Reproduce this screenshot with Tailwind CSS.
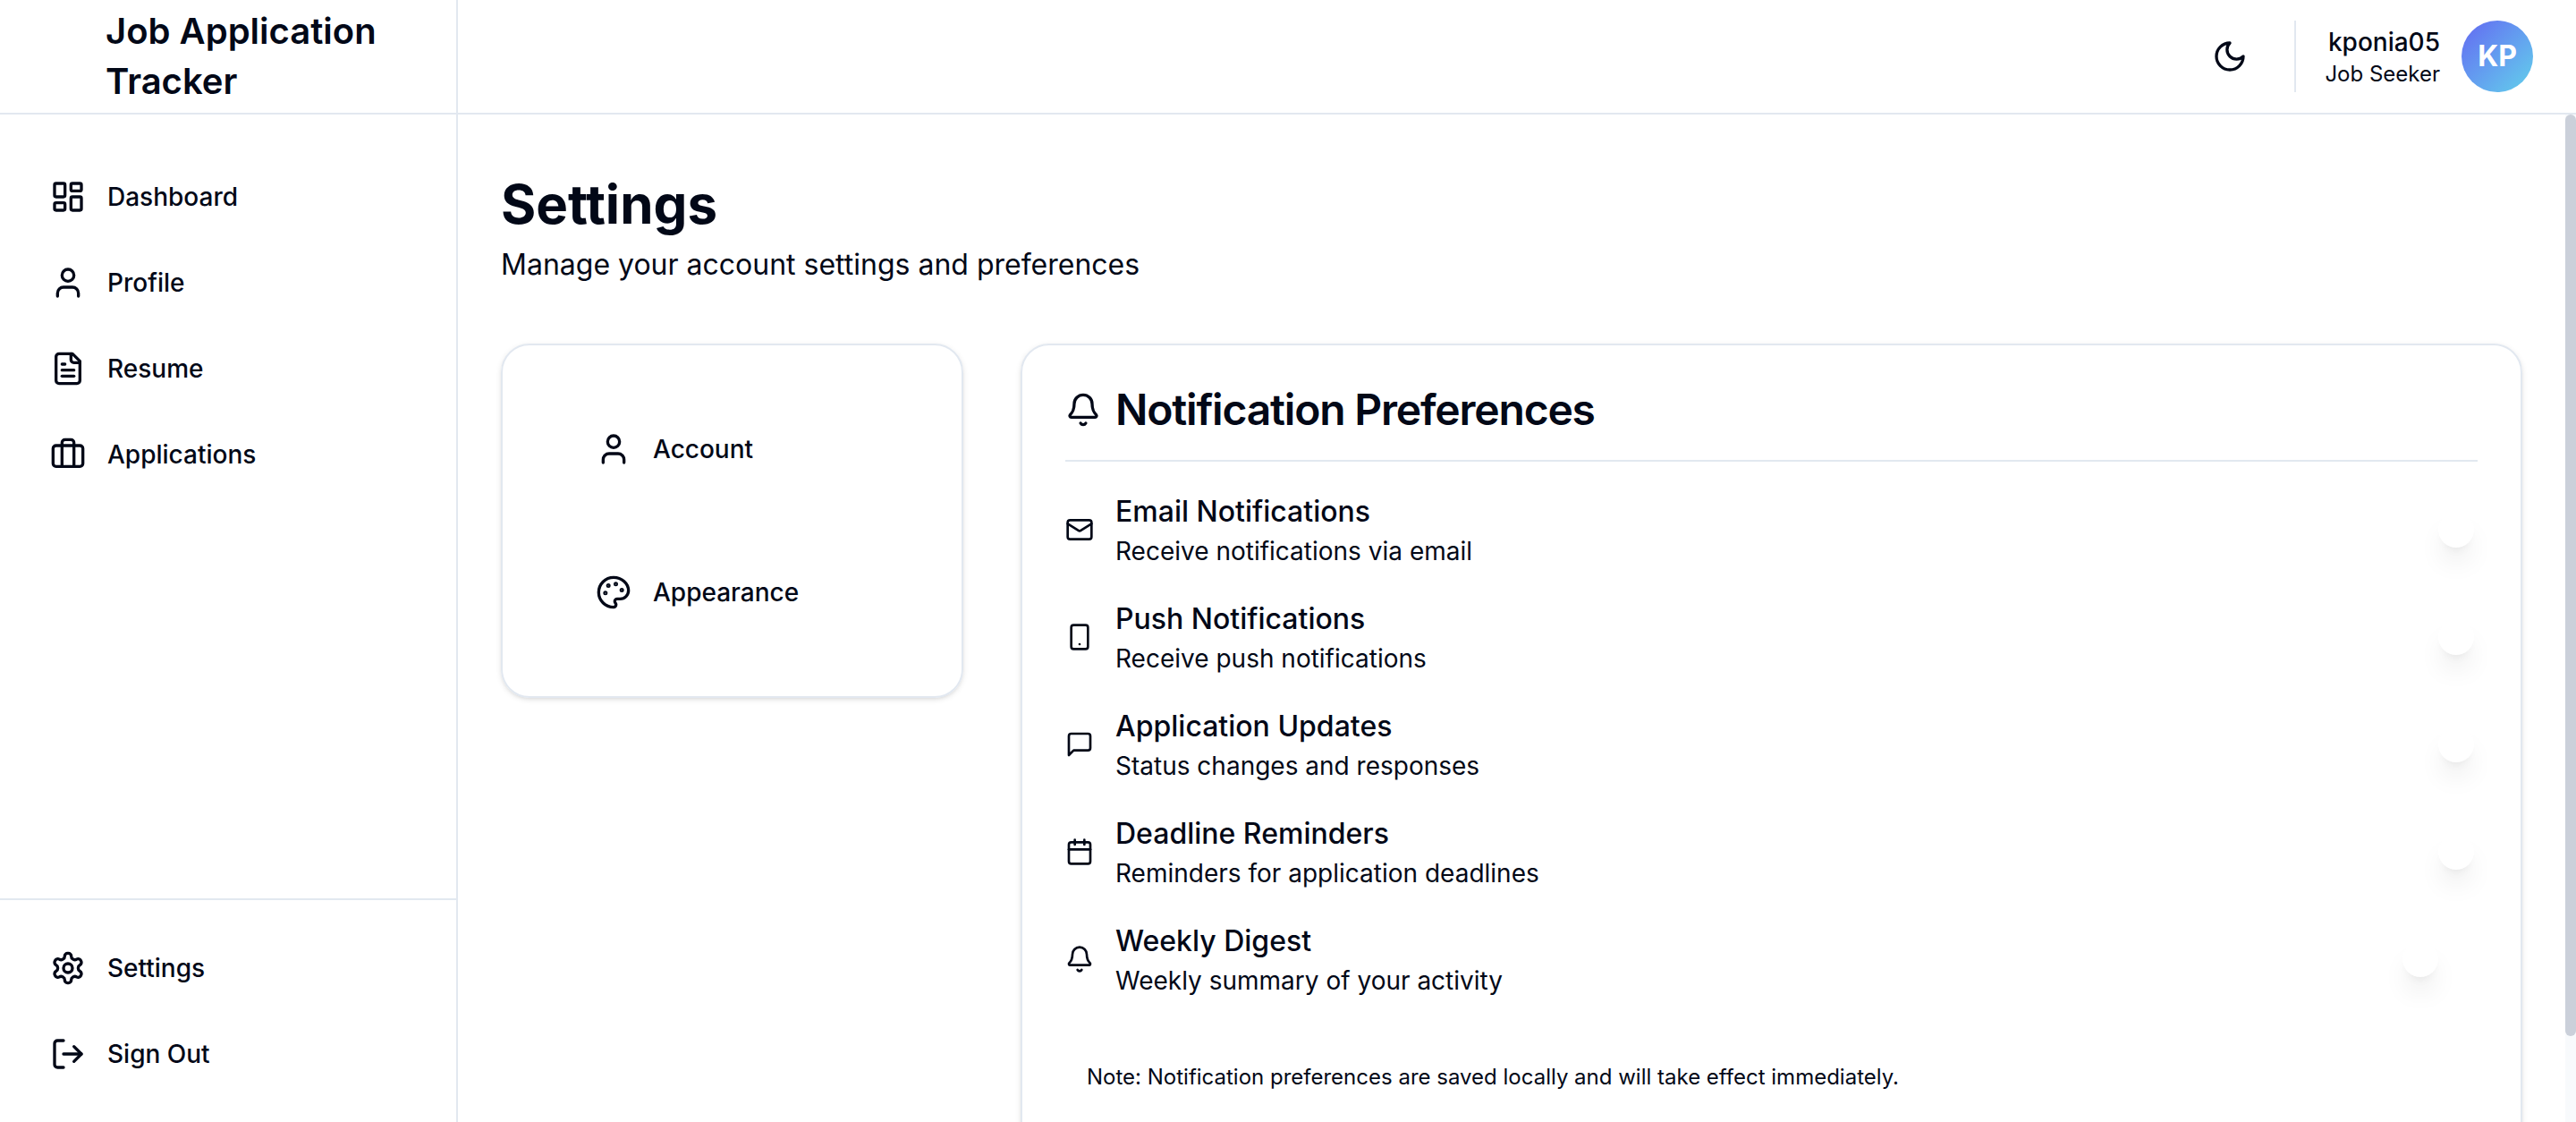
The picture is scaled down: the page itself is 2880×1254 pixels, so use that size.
<!DOCTYPE html>
<html lang="en">
<head>
<meta charset="utf-8">
<meta name="viewport" content="width=device-width, initial-scale=1">
<title>Settings - Job Application Tracker</title>
<script src="https://cdn.jsdelivr.net/npm/@tailwindcss/browser@4"></script>
</head>
<body class="flex h-screen overflow-hidden bg-white font-[Inter,sans-serif] text-[28px] leading-10 text-[#020817] antialiased">

<!-- Icon sprite -->
<svg class="hidden" aria-hidden="true">
  <symbol id="i-dashboard" viewBox="0 0 24 24"><rect width="7" height="9" x="3" y="3" rx="1"/><rect width="7" height="5" x="14" y="3" rx="1"/><rect width="7" height="9" x="14" y="12" rx="1"/><rect width="7" height="5" x="3" y="16" rx="1"/></symbol>
  <symbol id="i-user" viewBox="0 0 24 24"><path d="M19 21v-2a4 4 0 0 0-4-4H9a4 4 0 0 0-4 4v2"/><circle cx="12" cy="7" r="4"/></symbol>
  <symbol id="i-file" viewBox="0 0 24 24"><path d="M15 2H6a2 2 0 0 0-2 2v16a2 2 0 0 0 2 2h12a2 2 0 0 0 2-2V7Z"/><path d="M14 2v4a2 2 0 0 0 2 2h4"/><path d="M10 9H8"/><path d="M16 13H8"/><path d="M16 17H8"/></symbol>
  <symbol id="i-briefcase" viewBox="0 0 24 24"><path d="M16 20V4a2 2 0 0 0-2-2h-4a2 2 0 0 0-2 2v16"/><rect width="20" height="14" x="2" y="6" rx="2"/></symbol>
  <symbol id="i-settings" viewBox="0 0 24 24"><path d="M12.22 2h-.44a2 2 0 0 0-2 2v.18a2 2 0 0 1-1 1.73l-.43.25a2 2 0 0 1-2 0l-.15-.08a2 2 0 0 0-2.73.73l-.22.38a2 2 0 0 0 .73 2.73l.15.1a2 2 0 0 1 1 1.72v.51a2 2 0 0 1-1 1.74l-.15.09a2 2 0 0 0-.73 2.73l.22.38a2 2 0 0 0 2.73.73l.15-.08a2 2 0 0 1 2 0l.43.25a2 2 0 0 1 1 1.73V20a2 2 0 0 0 2 2h.44a2 2 0 0 0 2-2v-.18a2 2 0 0 1 1-1.73l.43-.25a2 2 0 0 1 2 0l.15.08a2 2 0 0 0 2.73-.73l.22-.39a2 2 0 0 0-.73-2.73l-.15-.08a2 2 0 0 1-1-1.74v-.5a2 2 0 0 1 1-1.74l.15-.09a2 2 0 0 0 .73-2.73l-.22-.38a2 2 0 0 0-2.73-.73l-.15.08a2 2 0 0 1-2 0l-.43-.25a2 2 0 0 1-1-1.73V4a2 2 0 0 0-2-2z"/><circle cx="12" cy="12" r="3"/></symbol>
  <symbol id="i-logout" viewBox="0 0 24 24"><path d="M9 21H5a2 2 0 0 1-2-2V5a2 2 0 0 1 2-2h4"/><path d="m16 17 5-5-5-5"/><path d="M21 12H9"/></symbol>
  <symbol id="i-moon" viewBox="0 0 24 24"><path d="M12 3a6 6 0 0 0 9 9 9 9 0 1 1-9-9Z"/></symbol>
  <symbol id="i-palette" viewBox="0 0 24 24"><circle cx="13.5" cy="6.5" r=".5" fill="currentColor"/><circle cx="17.5" cy="10.5" r=".5" fill="currentColor"/><circle cx="8.5" cy="7.5" r=".5" fill="currentColor"/><circle cx="6.5" cy="12.5" r=".5" fill="currentColor"/><path d="M12 2C6.5 2 2 6.5 2 12s4.5 10 10 10c.926 0 1.648-.746 1.648-1.688 0-.437-.18-.835-.437-1.125-.29-.289-.438-.652-.438-1.125a1.64 1.64 0 0 1 1.668-1.668h1.996c3.051 0 5.555-2.503 5.555-5.554C21.965 6.012 17.461 2 12 2z"/></symbol>
  <symbol id="i-bell" viewBox="0 0 24 24"><path d="M10.268 21a2 2 0 0 0 3.464 0"/><path d="M3.262 15.326A1 1 0 0 0 4 17h16a1 1 0 0 0 .74-1.673C19.41 13.956 18 12.499 18 8A6 6 0 0 0 6 8c0 4.499-1.411 5.956-2.738 7.326"/></symbol>
  <symbol id="i-mail" viewBox="0 0 24 24"><rect width="20" height="16" x="2" y="4" rx="2"/><path d="m22 7-8.97 5.7a1.94 1.94 0 0 1-2.06 0L2 7"/></symbol>
  <symbol id="i-phone" viewBox="0 0 24 24"><rect width="14" height="20" x="5" y="2" rx="2"/><path d="M12 18h.01"/></symbol>
  <symbol id="i-message" viewBox="0 0 24 24"><path d="M21 15a2 2 0 0 1-2 2H7l-4 4V5a2 2 0 0 1 2-2h14a2 2 0 0 1 2 2z"/></symbol>
  <symbol id="i-calendar" viewBox="0 0 24 24"><path d="M8 2v4"/><path d="M16 2v4"/><rect width="18" height="18" x="3" y="4" rx="2"/><path d="M3 10h18"/></symbol>
</svg>

<aside class="flex w-[512px] shrink-0 flex-col border-r-2 border-slate-200">
  <div class="flex h-32 shrink-0 items-center border-b-2 border-slate-200 pr-12 pl-[118px]">
    <span class="text-[40px] leading-14 font-semibold">Job Application Tracker</span>
  </div>
  <nav class="flex flex-1 flex-col gap-2 px-8 py-12 font-medium">
    <a href="#" class="flex items-center gap-6 rounded-2xl px-6 py-6"><svg class="size-10 fill-none stroke-current stroke-2 [stroke-linecap:round] [stroke-linejoin:round]"><use href="#i-dashboard"/></svg>Dashboard</a>
    <a href="#" class="flex items-center gap-6 rounded-2xl px-6 py-6"><svg class="size-10 fill-none stroke-current stroke-2 [stroke-linecap:round] [stroke-linejoin:round]"><use href="#i-user"/></svg>Profile</a>
    <a href="#" class="flex items-center gap-6 rounded-2xl px-6 py-6"><svg class="size-10 fill-none stroke-current stroke-2 [stroke-linecap:round] [stroke-linejoin:round]"><use href="#i-file"/></svg>Resume</a>
    <a href="#" class="flex items-center gap-6 rounded-2xl px-6 py-6"><svg class="size-10 fill-none stroke-current stroke-2 [stroke-linecap:round] [stroke-linejoin:round]"><use href="#i-briefcase"/></svg>Applications</a>
  </nav>
  <div class="flex flex-col gap-2 border-t-2 border-slate-200 p-8 font-medium">
    <a href="#" class="flex items-center gap-6 rounded-2xl px-6 py-6"><svg class="size-10 fill-none stroke-current stroke-2 [stroke-linecap:round] [stroke-linejoin:round]"><use href="#i-settings"/></svg>Settings</a>
    <button type="button" class="flex items-center gap-6 rounded-2xl px-6 py-6"><svg class="size-10 fill-none stroke-current stroke-2 [stroke-linecap:round] [stroke-linejoin:round]"><use href="#i-logout"/></svg>Sign Out</button>
  </div>
</aside>

<div class="flex min-w-0 flex-1 flex-col">
  <header class="flex h-32 shrink-0 items-center justify-end gap-8 border-b-2 border-slate-200 px-12">
    <button type="button" aria-label="Toggle dark mode" class="flex size-20 items-center justify-center rounded-full"><svg class="size-10 fill-none stroke-current stroke-2 [stroke-linecap:round] [stroke-linejoin:round]"><use href="#i-moon"/></svg></button>
    <div class="flex items-center gap-6 border-l-2 border-slate-200 pl-8">
      <div class="text-right">
        <p class="font-medium">kponia05</p>
        <p class="text-2xl">Job Seeker</p>
      </div>
      <div class="flex size-20 items-center justify-center rounded-full bg-linear-135 from-[#6366f1] to-[#62d0ea] text-[32px] font-bold text-white">KP</div>
    </div>
  </header>

  <div class="flex min-h-0 flex-1">
    <main class="min-w-0 flex-1 overflow-hidden px-12 py-16">
      <h1 class="text-[60px] leading-18 font-bold">Settings</h1>
      <p class="mt-2 text-[32px] leading-12">Manage your account settings and preferences</p>

      <div class="mt-16 grid grid-cols-4 items-start gap-16">
        <nav class="flex flex-col gap-6 rounded-[32px] border-2 border-slate-200 p-12 font-medium shadow-[0_2px_6px_0_rgb(0_0_0/0.1),0_2px_4px_-2px_rgb(0_0_0/0.1)]">
          <a href="#" class="flex items-center gap-6 px-14 py-12"><svg class="size-10 fill-none stroke-current stroke-2 [stroke-linecap:round] [stroke-linejoin:round]"><use href="#i-user"/></svg>Account</a>
          <a href="#" class="flex items-center gap-6 px-14 py-12"><svg class="size-10 fill-none stroke-current stroke-2 [stroke-linecap:round] [stroke-linejoin:round]"><use href="#i-palette"/></svg>Appearance</a>
        </nav>

        <section class="col-span-3 rounded-[32px] border-2 border-slate-200 p-12 shadow-[0_2px_6px_0_rgb(0_0_0/0.1),0_2px_4px_-2px_rgb(0_0_0/0.1)]">
          <div class="flex items-center gap-4 border-b-2 border-slate-200 pb-8">
            <svg class="size-10 fill-none stroke-current stroke-2 [stroke-linecap:round] [stroke-linejoin:round]"><use href="#i-bell"/></svg>
            <h2 class="text-5xl leading-12 font-semibold tracking-tight">Notification Preferences</h2>
          </div>

          <div class="mt-8 flex flex-col gap-8">
            <div class="flex items-center gap-6">
              <svg class="size-8 fill-none stroke-current stroke-2 [stroke-linecap:round] [stroke-linejoin:round]"><use href="#i-mail"/></svg>
              <div class="flex-1"><label for="email" class="block text-[32px] leading-12 font-medium">Email Notifications</label><p>Receive notifications via email</p></div>
              <input id="email" type="checkbox" role="switch" checked class="flex h-12 w-22 appearance-none items-center rounded-full px-1 before:size-10 before:rounded-full before:bg-white before:shadow-[0_20px_30px_-6px_rgb(0_0_0/0.1),0_8px_12px_-8px_rgb(0_0_0/0.1)] checked:before:translate-x-10">
            </div>
            <div class="flex items-center gap-6">
              <svg class="size-8 fill-none stroke-current stroke-2 [stroke-linecap:round] [stroke-linejoin:round]"><use href="#i-phone"/></svg>
              <div class="flex-1"><label for="push" class="block text-[32px] leading-12 font-medium">Push Notifications</label><p>Receive push notifications</p></div>
              <input id="push" type="checkbox" role="switch" checked class="flex h-12 w-22 appearance-none items-center rounded-full px-1 before:size-10 before:rounded-full before:bg-white before:shadow-[0_20px_30px_-6px_rgb(0_0_0/0.1),0_8px_12px_-8px_rgb(0_0_0/0.1)] checked:before:translate-x-10">
            </div>
            <div class="flex items-center gap-6">
              <svg class="size-8 fill-none stroke-current stroke-2 [stroke-linecap:round] [stroke-linejoin:round]"><use href="#i-message"/></svg>
              <div class="flex-1"><label for="updates" class="block text-[32px] leading-12 font-medium">Application Updates</label><p>Status changes and responses</p></div>
              <input id="updates" type="checkbox" role="switch" checked class="flex h-12 w-22 appearance-none items-center rounded-full px-1 before:size-10 before:rounded-full before:bg-white before:shadow-[0_20px_30px_-6px_rgb(0_0_0/0.1),0_8px_12px_-8px_rgb(0_0_0/0.1)] checked:before:translate-x-10">
            </div>
            <div class="flex items-center gap-6">
              <svg class="size-8 fill-none stroke-current stroke-2 [stroke-linecap:round] [stroke-linejoin:round]"><use href="#i-calendar"/></svg>
              <div class="flex-1"><label for="deadlines" class="block text-[32px] leading-12 font-medium">Deadline Reminders</label><p>Reminders for application deadlines</p></div>
              <input id="deadlines" type="checkbox" role="switch" checked class="flex h-12 w-22 appearance-none items-center rounded-full px-1 before:size-10 before:rounded-full before:bg-white before:shadow-[0_20px_30px_-6px_rgb(0_0_0/0.1),0_8px_12px_-8px_rgb(0_0_0/0.1)] checked:before:translate-x-10">
            </div>
            <div class="flex items-center gap-6">
              <svg class="size-8 fill-none stroke-current stroke-2 [stroke-linecap:round] [stroke-linejoin:round]"><use href="#i-bell"/></svg>
              <div class="flex-1"><label for="digest" class="block text-[32px] leading-12 font-medium">Weekly Digest</label><p>Weekly summary of your activity</p></div>
              <input id="digest" type="checkbox" role="switch" class="flex h-12 w-22 appearance-none items-center rounded-full px-1 before:size-10 before:rounded-full before:bg-white before:shadow-[0_20px_30px_-6px_rgb(0_0_0/0.1),0_8px_12px_-8px_rgb(0_0_0/0.1)] checked:before:translate-x-10">
            </div>
          </div>

          <p class="mt-12 p-6 text-2xl">Note: Notification preferences are saved locally and will take effect immediately.</p>
        </section>
      </div>
    </main>
    <!-- Scroll track and thumb -->
    <div class="w-3 shrink-0 bg-slate-50" aria-hidden="true"><div class="h-[91.5%] rounded-full bg-[#cbd0da]"></div></div>
  </div>
</div>
</body>
</html>
